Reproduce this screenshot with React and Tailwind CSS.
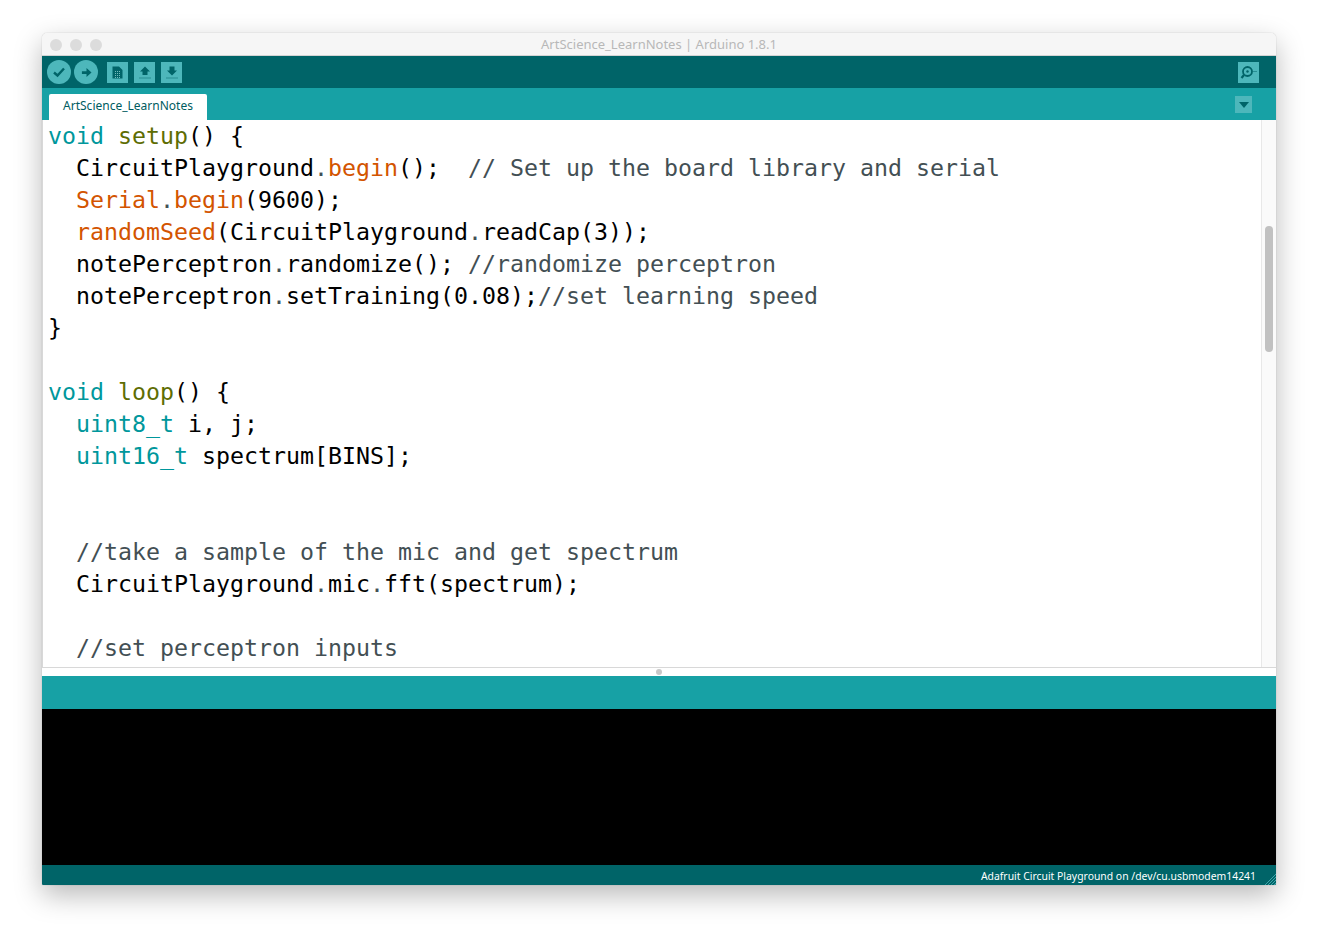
import React from "react";

const K = ({ c, children }) => <span className={c}>{children}</span>;
const T = "text-[#00979c]";
const O = "text-[#5e6d03]";
const R = "text-[#d35400]";
const G = "text-[#434f54]";

const lines = [
  [[T, "void"], [null, " "], [O, "setup"], [null, "() {"]],
  [[null, "  CircuitPlayground"], [G, "."], [R, "begin"], [null, "();  "], [G, "// Set up the board library and serial"]],
  [[R, "  Serial"], [G, "."], [R, "begin"], [null, "(9600);"]],
  [[R, "  randomSeed"], [null, "(CircuitPlayground"], [G, "."], [null, "readCap(3));"]],
  [[null, "  notePerceptron"], [G, "."], [null, "randomize(); "], [G, "//randomize perceptron"]],
  [[null, "  notePerceptron"], [G, "."], [null, "setTraining(0.08);"], [G, "//set learning speed"]],
  [[null, "}"]],
  [[null, " "]],
  [[T, "void"], [null, " "], [O, "loop"], [null, "() {"]],
  [[T, "  uint8_t"], [null, " i, j;"]],
  [[T, "  uint16_t"], [null, " spectrum[BINS];"]],
  [[null, " "]],
  [[null, " "]],
  [[G, "  //take a sample of the mic and get spectrum"]],
  [[null, "  CircuitPlayground"], [G, "."], [null, "mic"], [G, "."], [null, "fft(spectrum);"]],
  [[null, " "]],
  [[G, "  //set perceptron inputs"]],
];

const Circle = ({ children }) => (
  <div className="flex h-[24px] w-[24px] items-center justify-center rounded-full bg-[#4db7bb]">{children}</div>
);
const Square = ({ children }) => (
  <div className="flex h-[21px] w-[21px] items-center justify-center bg-[#4db7bb]">{children}</div>
);

export default function App() {
  return (
    <div className="h-[936px] w-[1318px] overflow-hidden bg-white pl-[42px] pt-[33px]" style={{ fontFamily: '"Noto Sans", sans-serif' }}>
      <div className="flex h-[852px] w-[1234px] flex-col overflow-hidden rounded-t-[5px] rounded-b-[1px] bg-white shadow-[0_10px_28px_rgba(0,0,0,0.28),0_0_1px_rgba(0,0,0,0.35)]">
        {/* title bar */}
        <div className="relative flex h-[23px] shrink-0 items-center border-b border-[#d4d4d4] bg-[#f6f6f6] pl-[8px] pt-[1px]">
          <div className="flex gap-[8px]">
            <div className="h-[12px] w-[12px] rounded-full bg-[#dcdcdc]" />
            <div className="h-[12px] w-[12px] rounded-full bg-[#dcdcdc]" />
            <div className="h-[12px] w-[12px] rounded-full bg-[#dcdcdc]" />
          </div>
          <div className="absolute inset-0 flex items-center justify-center pt-[2px] text-[13px] text-[#b8b8b8]">
            ArtScience_LearnNotes | Arduino 1.8.1
          </div>
        </div>
        {/* toolbar */}
        <div className="flex h-[32px] shrink-0 items-center bg-[#006468] pl-[5px] pr-[17px]">
          <div className="flex gap-[3px]">
            <Circle>
              <svg width="14" height="14" viewBox="0 0 14 14" fill="none" stroke="#006468" strokeWidth="2.4"><path d="M2 7.5 L5.5 10.5 L12 3.5" /></svg>
            </Circle>
            <Circle>
              <svg width="11" height="11" viewBox="0 0 12 12" fill="#006468"><path d="M1 4.5 H6 V1 L11.5 6 L6 11 V7.5 H1 Z" /></svg>
            </Circle>
          </div>
          <div className="ml-[9px] flex gap-[6px]">
            <Square>
              <svg width="11" height="13" viewBox="0 0 11 13"><path d="M0.5 0.5 H7 L10.5 4 V12.5 H0.5 Z" fill="#006468" /><path d="M3 5.5 H9 M3 7.5 H9 M3 9.5 H9 M3 11.5 H9" stroke="#8fd0d2" strokeWidth="0.8" strokeDasharray="1 1" /></svg>
            </Square>
            <Square>
              <svg width="12" height="13" viewBox="0 0 12 13" fill="#006468"><path d="M6 0.5 L11 5.5 H8.5 V9 H3.5 V5.5 H1 Z" /><path d="M0.5 12 H11.5" stroke="#006468" strokeWidth="1" strokeDasharray="1 1" /></svg>
            </Square>
            <Square>
              <svg width="12" height="13" viewBox="0 0 12 13" fill="#006468"><path d="M6 9.5 L11 4.5 H8.5 V0.5 H3.5 V4.5 H1 Z" /><path d="M0.5 12 H11.5" stroke="#006468" strokeWidth="1" strokeDasharray="1 1" /></svg>
            </Square>
          </div>
          <div className="ml-auto">
            <Square>
              <svg width="17" height="15" viewBox="0 0 17 15" fill="none" stroke="#006468"><circle cx="7.5" cy="6.5" r="4.5" strokeWidth="1.8" /><circle cx="7.5" cy="6.5" r="1.2" fill="#006468" stroke="none" /><path d="M4 10 L1.5 13" strokeWidth="2.2" /><path d="M13.5 6.5 H14.5 M15.5 6.5 H16.5" strokeWidth="1" /></svg>
            </Square>
          </div>
        </div>
        {/* tab bar */}
        <div className="flex h-[32px] shrink-0 items-end bg-[#17a1a5] pl-[7px] pr-[24px]">
          <div className="flex h-[26px] w-[158px] items-center justify-center rounded-t-[2px] bg-white pb-[2px] text-[12px] text-[#005c5f]">
            ArtScience_LearnNotes
          </div>
          <div className="ml-auto mb-[7px] flex h-[17px] w-[17px] items-center justify-center bg-[#4db7bb]">
            <div className="h-0 w-0 border-x-[5px] border-t-[6px] border-x-transparent border-t-[#006468]" />
          </div>
        </div>
        {/* editor */}
        <div className="flex h-[547px] shrink-0 overflow-hidden">
          <pre className="min-w-0 flex-1 overflow-hidden border-l border-[#d8d8d8] pl-[5px] text-[23.25px] leading-[32px] text-black" style={{ fontFamily: '"DejaVu Sans Mono", monospace' }}>
            {lines.map((l, i) => (
              <div key={i} className="h-[32px]">
                {l.map(([c, t], j) => (c ? <K key={j} c={c}>{t}</K> : <span key={j}>{t}</span>))}
              </div>
            ))}
          </pre>
          <div className="w-[15px] shrink-0 border-l border-[#e8e8e8] bg-[#fafafa] pl-[3px] pt-[106px]">
            <div className="h-[126px] w-[8px] rounded-full bg-[#c1c1c1]" />
          </div>
        </div>
        {/* divider */}
        <div className="flex h-[9px] shrink-0 justify-center border-t border-[#d8d8d8] bg-white pt-[1px]">
          <div className="h-[6px] w-[6px] rounded-full bg-[#c8c8c8]" />
        </div>
        {/* message bar */}
        <div className="h-[33px] shrink-0 bg-[#17a1a5]" />
        {/* console */}
        <div className="min-h-0 flex-1 bg-black" />
        {/* status */}
        <div className="relative flex h-[20px] shrink-0 items-center justify-end bg-[#006468] pr-[20px] pt-[3px] text-[10.4px] text-white">
          Adafruit Circuit Playground on /dev/cu.usbmodem14241
          <svg className="absolute bottom-0 right-0" width="12" height="12" viewBox="0 0 12 12" stroke="#4db7bb" strokeWidth="0.8"><path d="M1 12 L12 1 M4 12 L12 4 M7 12 L12 7 M10 12 L12 10" /></svg>
        </div>
      </div>
    </div>
  );
}
